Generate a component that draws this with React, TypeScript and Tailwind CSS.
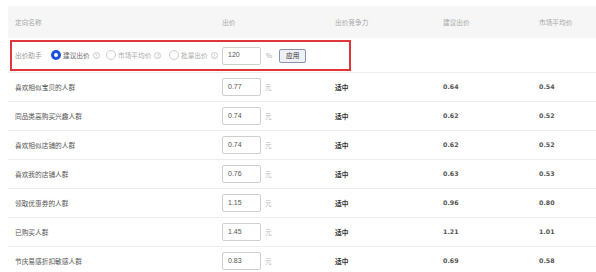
import React from "react";

const rows = [
  { name: "喜欢相似宝贝的人群", bid: "0.77", s: "0.64", m: "0.54" },
  { name: "同品类高购买兴趣人群", bid: "0.74", s: "0.62", m: "0.52" },
  { name: "喜欢相似店铺的人群", bid: "0.74", s: "0.62", m: "0.52" },
  { name: "喜欢我的店铺人群", bid: "0.76", s: "0.63", m: "0.53" },
  { name: "领取优惠券的人群", bid: "1.15", s: "0.96", m: "0.80" },
  { name: "已购买人群", bid: "1.45", s: "1.21", m: "1.01" },
  { name: "节庆易感折扣敏感人群", bid: "0.83", s: "0.69", m: "0.58" },
];

const cjk = { fontFamily: '"Noto Sans CJK SC", "Noto Sans", sans-serif' };
const num = { fontFamily: '"DejaVu Sans", "Noto Sans CJK SC", sans-serif' };
const arial = { fontFamily: '"Liberation Sans", "Noto Sans CJK SC", sans-serif' };

function Q() {
  return (
    <span className="ml-[3px] inline-flex h-[7px] w-[7px] items-center justify-center rounded-full border border-[#c8c8c8] text-[5px] leading-none text-[#bbb]">
      ?
    </span>
  );
}

function Radio({ label, checked }: { label: string; checked?: boolean }) {
  return (
    <div className="flex items-center">
      {checked ? (
        <span className="h-[10px] w-[10px] rounded-full border-[3px] border-[#1f4fd8] bg-white" />
      ) : (
        <span className="h-[10px] w-[10px] rounded-full border border-[#cfcfcf] bg-white" />
      )}
      <span className={`ml-[2px] ${checked ? "text-[#666]" : "text-[#aaa]"}`}>{label}</span>
      <Q />
    </div>
  );
}

export default function App() {
  return (
    <div className="h-[272px] w-[596px] overflow-hidden bg-white pl-[8px] pt-[6px] text-[6.7px]" style={cjk}>
      <div className="grid h-[32px] grid-cols-[207px_113px_108px_96px_1fr] items-center bg-[#f6f6f6] pl-[7px] text-[#a8a8a8]">
        <span>定向名称</span>
        <span>出价</span>
        <span>出价竞争力</span>
        <span>建议出价</span>
        <span>市场平均价</span>
      </div>
      <div className="border-b border-[#ececec] pb-[1px] pt-[2px]">
        <div className="ml-[2px] flex h-[31px] w-[341px] items-center border-2 border-[#e0363b] pl-[3px]">
          <span className="w-[36px] text-[#999]">出价助手</span>
          <div className="w-[55px]">
            <Radio label="建议出价" checked />
          </div>
          <div className="w-[63px]">
            <Radio label="市场平均价" />
          </div>
          <div className="w-[53px]">
            <Radio label="批量出价" />
          </div>
          <div className="flex h-[18px] w-[39px] items-center rounded-[2px] border border-[#cfcfcf] pl-[5px] text-[7px] text-[#555]" style={arial}>
            120
          </div>
          <span className="ml-[5px] text-[#aaa]">%</span>
          <div className="ml-[7px] flex h-[14px] w-[27px] items-center justify-center rounded-[2px] border border-[#8a93b3] bg-[#eef0f7] text-[#333]">
            应用
          </div>
        </div>
      </div>
      {rows.map((r) => (
        <div
          key={r.name}
          className="grid h-[29px] grid-cols-[207px_113px_108px_96px_1fr] items-center border-b border-[#ececec] pl-[7px]"
        >
          <span className="text-[#555]">{r.name}</span>
          <div className="flex items-center">
            <div className="flex h-[18px] w-[39px] items-center rounded-[2px] border border-[#cfcfcf] pl-[5px] text-[7px] text-[#555]" style={arial}>
              {r.bid}
            </div>
            <span className="ml-[4px] text-[#bbb]">元</span>
          </div>
          <span className="font-bold text-[#333]">适中</span>
          <span className="text-[6.3px] font-bold text-[#555]" style={num}>
            {r.s}
          </span>
          <span className="text-[6.3px] font-bold text-[#555]" style={num}>
            {r.m}
          </span>
        </div>
      ))}
    </div>
  );
}
